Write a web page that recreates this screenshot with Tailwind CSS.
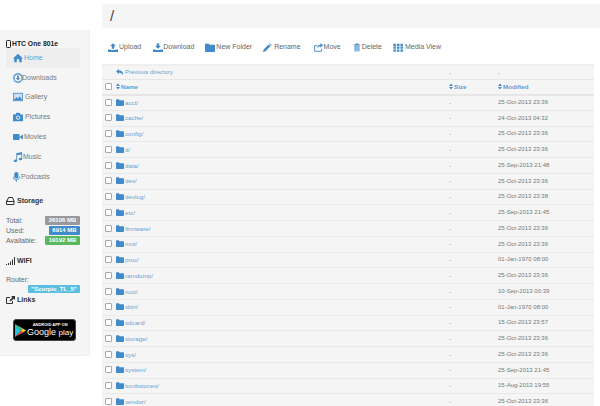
<!DOCTYPE html>
<html lang="en">
<head>
<meta charset="UTF-8">
<title>File Manager</title>
<script src="https://cdn.jsdelivr.net/npm/@tailwindcss/browser@4"></script>
</head>
<body class="bg-white text-[#666] font-['Liberation_Sans',sans-serif] overflow-hidden">
<svg class="hidden">
  <symbol id="folder" viewBox="0 0 16 14"><path fill="currentColor" d="M0 2a1.5 1.5 0 0 1 1.5-1.5h4L7.5 2.500H14.500A1.500 1.500 0 0 1 16 4v8.500a1.500 1.500 0 0 1-1.500 1.500h-13A1.500 1.500 0 0 1 0 12.500z"/></symbol>
  <symbol id="sort" viewBox="0 0 8 12"><path fill="currentColor" d="M4 0l4 5H0zM4 12l4-5H0z"/></symbol>
  <symbol id="upload" viewBox="0 0 16 14"><path fill="currentColor" d="M8 0l4.500 4.500H10V9H6V4.500H3.500zM0 10h4.500v1h7v-1H16v4H0z"/></symbol>
  <symbol id="download" viewBox="0 0 16 14"><path fill="currentColor" d="M6 0h4v4.500h2.500L8 9 3.500 4.500H6zM0 10h4.500v1h7v-1H16v4H0z"/></symbol>
</svg>
<div class="flex h-[406px] w-[600px]">
  <!-- Sidebar -->
  <aside class="w-[90px] shrink-0 mt-[30px] h-[326px] bg-[#f5f5f5] rounded-br border-b border-r border-[#eee] pl-[6px] pr-[9px] text-[7px] leading-[10px]">
    <div class="flex items-center gap-[1px] mt-[9px] h-[10px] font-bold text-[#222] text-[6.800px]">
      <svg class="w-[5px] h-[8px]" viewBox="0 0 5 8"><rect x=".5" y=".5" width="4" height="7" rx=".8" fill="none" stroke="#222"/></svg>HTC One 801e
    </div>
    <nav id="nav" class="mt-[-1px] text-[#777]"></nav>
    <div class="flex items-center gap-[2px] mt-[8px] h-[12px] font-bold text-[#333]">
      <svg class="w-[9px] h-[8px]" viewBox="0 0 9 8"><path fill="none" stroke="#333" d="M1 4l1.500-3.500h4L8 4v3.500H.5V4zM1 4.500h7"/></svg>Storage
    </div>
    <div class="mt-[9px] flex flex-col">
      <div class="flex justify-between items-center h-[10px]"><span>Total:</span><span class="bg-[#999] text-white font-bold text-[6px] leading-[8.500px] rounded-[1px] w-[35px] text-center whitespace-nowrap">26106 MB</span></div>
      <div class="flex justify-between items-center h-[10px]"><span>Used:</span><span class="bg-[#428bca] text-white font-bold text-[6px] leading-[8.500px] rounded-[1px] w-[31px] text-center whitespace-nowrap">6914 MB</span></div>
      <div class="flex justify-between items-center h-[10px]"><span>Available:</span><span class="bg-[#5cb85c] text-white font-bold text-[6px] leading-[8.500px] rounded-[1px] w-[35px] text-center whitespace-nowrap">19192 MB</span></div>
    </div>
    <div class="flex items-center gap-[1px] mt-[9px] h-[12px] font-bold text-[#333]">
      <svg class="w-[10px] h-[8px]" viewBox="0 0 10 8"><path fill="#333" d="M0 7h1v1H0zM2 6h1v2H2zM4 4.500h1V8H4zM6 2.500h1V8H6zM8 0h1v8H8z"/></svg>WIFI
    </div>
    <div class="mt-[8px] h-[10px]">Router:</div>
    <div class="flex justify-end"><span class="bg-[#5bc0de] text-white font-bold text-[6px] leading-[8.500px] rounded-[1px] w-[52px] text-center whitespace-nowrap">"Scorpio_TL_5"</span></div>
    <div class="flex items-center gap-[2px] mt-[0.500px] h-[12px] font-bold text-[#333]">
      <svg class="w-[9px] h-[8px]" viewBox="0 0 9 8"><path fill="none" stroke="#333" d="M6.500 5v2.500H.5v-6H4"/><path fill="#333" d="M5 0h4v4L7.700 2.700 4.500 5.500 3.500 4.500 6.300 1.300z"/></svg>Links
    </div>
    <div class="mt-[13.500px] ml-[7px] w-[63px] h-[22px] bg-black rounded-[3px] border border-[#444] flex items-center pl-[1px] gap-[1px] overflow-hidden">
      <svg class="w-[11px] h-[13px] shrink-0" viewBox="0 0 11 13">
        <path fill="#26c6da" d="M0 0v13l6-6.500z"/><path fill="#66bb6a" d="M0 0l8 4.500L6 6.500z"/><path fill="#ef5350" d="M0 13l8-4.500L6 6.500z"/><path fill="#ffca28" d="M8 4.500L11 6.500 8 8.500 6 6.500z"/>
      </svg>
      <div class="text-white whitespace-nowrap">
        <div class="text-[4px] leading-[5px] font-bold text-center">ANDROID APP ON</div>
        <div class="text-[9px] leading-[11px]">Google <span class="text-[8px]">play</span></div>
      </div>
    </div>
  </aside>

  <!-- Main -->
  <main class="flex-1 ml-[12px] min-w-0">
    <div class="h-[24px] mt-[4px] bg-[#f5f5f5] pl-[8px] text-[15px] leading-[24px] text-[#444]">/</div>
    <div class="flex items-center h-[12px] mt-[13px] text-[7px] text-[#666] pl-[6px]" id="toolbar"></div>
    <div class="mr-[6px]">
      <table class="w-full mt-[11px] border-collapse text-[6.200px] bg-[#f5f5f5] table-fixed">
        <colgroup><col class="w-[347px]"><col class="w-[49px]"><col></colgroup>
        <tbody id="rows"></tbody>
      </table>
    </div>
  </main>
</div>
<script>
  const navItems = [
    ['Home', '<path fill="currentColor" d="M6 1L0 6.500h1.500V11h3V7.500h3V11h3V6.500H12z"/>', 'ml-[1px]', true],
    ['Downloads', '<circle cx="6" cy="6" r="5" fill="none" stroke="currentColor" stroke-width="1.500"/><path fill="currentColor" d="M5 3h2v3h1.500L6 9 3.500 6H5z"/>', 'ml-[-1px]'],
    ['Gallery', '<rect x=".5" y="1.500" width="11" height="9" fill="#cfe0f0" stroke="currentColor"/><path fill="currentColor" d="M1 10l3-4 2 2 2-3 3 5z"/>', 'ml-[2px]'],
    ['Pictures', '<path fill="currentColor" d="M0 3h3l1-2h4l1 2h3v8H0z"/><circle cx="6" cy="6.800" r="2" fill="none" stroke="#fff"/>', 'ml-[2px]'],
    ['Movies', '<rect y="2.500" width="8" height="7" rx="1" fill="currentColor"/><path fill="currentColor" d="M8.500 5.500L12 3v6L8.500 6.500z"/>', 'ml-[1px]'],
    ['Music', '<path fill="currentColor" d="M4 1.500L11 0v8.500a2 1.500 0 1 1-1-1.300V3L5 4v6.500a2 1.500 0 1 1-1-1.300z"/>', ''],
    ['Podcasts', '<g transform="translate(-2)"><rect x="3.500" y="0" width="5" height="8" rx="2.500" fill="currentColor"/><path fill="none" stroke="currentColor" d="M2 5.500a4 4 0 0 0 8 0M6 9.500V12"/></g>', 'ml-[-2px]'],
  ];
  document.getElementById('nav').innerHTML = navItems.map(([label, icon, cls, active]) =>
    `<div class="flex items-center h-[19.800px] pl-[7px] ${active ? 'bg-[#eee] text-[#6a9fd0]' : ''}">
       <svg class="w-[10px] h-[10px] text-[#428bca]" viewBox="0 0 12 12">${icon}</svg><span class="${cls}">${label}</span>
     </div>`).join('');

  const tools = [
    ['Upload', '<use href="#upload"/>', 'gap-[1px] mr-[12px]', 'w-[10px]'],
    ['Download', '<use href="#download"/>', 'gap-[0px] mr-[11px]', 'w-[10px]'],
    ['New Folder', '<use href="#folder"/>', 'gap-[1px] mr-[11px]', 'w-[10px]'],
    ['Rename', '<path fill="currentColor" d="M0 14l1-4L9 2l3 3-8 8zM10 1l1-1 3 3-1 1z"/>', 'gap-[1px] mr-[13px]', 'w-[10px]'],
    ['Move', '<path fill="none" stroke="currentColor" stroke-width="1.500" d="M12 9v4H1V4h4"/><path fill="currentColor" d="M10 0l5 3.500L10 7V5Q6 5 5 9 5 3 10 2.500z"/>', 'gap-[0px] mr-[12px]', 'w-[10px]'],
    ['Delete', '<path fill="currentColor" opacity=".6" d="M2 3h10v11H2z"/><path fill="currentColor" d="M1 1.500h3.500V0h5v1.500H13V3H1z"/>', 'gap-[0px] mr-[11px]', 'w-[9px]'],
    ['Media View', '<path fill="currentColor" d="M0 1h4v3.500H0zM5.500 1h4v3.500h-4zM11 1h4v3.500h-4zM0 5.500h4V9H0zM5.500 5.500h4V9h-4zM11 5.500h4V9h-4zM0 10h4v3.500H0zM5.500 10h4v3.500h-4zM11 10h4v3.500h-4z"/>', 'gap-[1px]', 'w-[11px]'],
  ];
  document.getElementById('toolbar').innerHTML = tools.map(([label, icon, cls, w]) =>
    `<span class="flex items-center ${cls}"><svg class="${w} h-[9px] text-[#428bca]" viewBox="0 0 16 14">${icon}</svg>${label}</span>`).join('');

  const files = [
    ['acct/', '25-Oct-2013 23:36'], ['cache/', '24-Oct-2013 04:32'], ['config/', '25-Oct-2013 23:36'],
    ['d/', '25-Oct-2013 23:36'], ['data/', '25-Sep-2013 21:48'], ['dev/', '25-Oct-2013 23:36'],
    ['devlog/', '25-Oct-2013 23:38'], ['etc/', '25-Sep-2013 21:45'], ['firmware/', '25-Oct-2013 23:36'],
    ['mnt/', '25-Oct-2013 23:36'], ['proc/', '01-Jan-1970 08:00'], ['ramdump/', '25-Oct-2013 23:36'],
    ['root/', '10-Sep-2013 00:39'], ['sbin/', '01-Jan-1970 08:00'], ['sdcard/', '15-Oct-2013 23:57'],
    ['storage/', '25-Oct-2013 23:36'], ['sys/', '25-Oct-2013 23:36'], ['system/', '25-Sep-2013 21:45'],
    ['tombstones/', '15-Aug-2013 19:55'], ['vendor/', '25-Oct-2013 23:36'],
  ];
  const checkbox = '<span class="inline-block w-[7px] h-[7px] mr-[4px] align-[-1px] border border-[#aaa] bg-white rounded-[1px]"></span>';
  const sort = '<svg class="inline-block w-[4px] h-[7px] mr-[1px] align-[-1px] text-[#428bca]"><use href="#sort"/></svg>';
  let html = `<tr class="h-[14.500px] border-t-2 border-[#eee]">
      <td class="pl-[14px] text-[#6a9fd0] text-[6px]"><svg class="inline-block w-[8px] h-[6px] mr-[1px] text-[#428bca]" viewBox="0 0 8 6"><path fill="currentColor" d="M3 0L0 2.500 3 5V3.500Q6 3.500 7 6 7.500 1.500 3 1.500z"/></svg>Previous directory</td>
      <td class="text-[#888]">-</td><td class="text-[#888]">-</td></tr>
    <tr class="h-[15px] border-t border-[#e6e6e6] border-b-2 font-bold text-[#5b9bd5]">
      <td class="pl-[3px]">${checkbox}${sort}Name</td><td>${sort}Size</td><td>${sort}Modified</td></tr>`;
  html += files.map(([name, date]) => `<tr class="h-[15.760px] border-b border-[#e9e9e9]">
      <td class="pl-[3px] text-[#6a9fd0]">${checkbox}<svg class="inline-block w-[8px] h-[7px] mr-[1px] align-[-1px] text-[#428bca]"><use href="#folder"/></svg>${name}</td>
      <td class="text-[#888]">-</td><td class="text-[#777] text-[6px]">${date}</td></tr>`).join('');
  document.getElementById('rows').innerHTML = html;
</script>
</body>
</html>
